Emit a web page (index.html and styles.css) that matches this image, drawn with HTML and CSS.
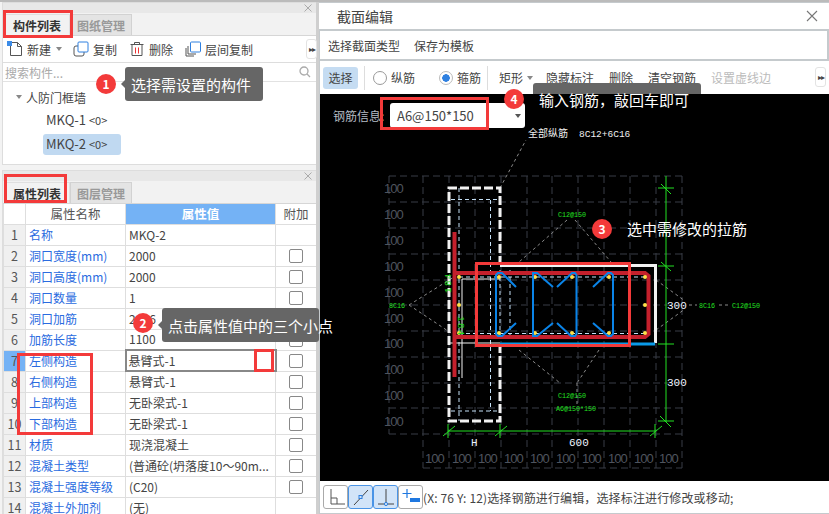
FILE: index.html
```html
<!DOCTYPE html>
<html lang="zh">
<head>
<meta charset="utf-8">
<title>截面编辑</title>
<link rel="stylesheet" href="styles.css">
</head>
<body>
<div class="page">
  <aside class="side">
    <section class="panel panel-top">
      <div class="panel-head"><svg class="close-x" viewBox="0 0 8 8"><path d="M.5 .5l7 7M7.500 .5l-7 7" stroke="#aaa"/></svg></div>
      <div class="tabs"><span class="tab active">构件列表</span><span class="tab">图纸管理</span></div>
      <div class="tools">
        <span class="tool tool-first">
          <svg class="ico" viewBox="0 0 16 16"><path d="M3.500 1.500h7l4 4v9h-11z" fill="#fff" stroke="#555"/><path d="M10.500 1.500v4h4" fill="none" stroke="#555"/><rect x="0" y="0" width="5" height="5" fill="#3b8be8"/></svg>新建<i class="caret"></i>
        </span>
        <span class="tool">
          <svg class="ico" viewBox="0 0 16 16"><rect x="1" y="5" width="10" height="10" rx="2" fill="#fff" stroke="#555"/><rect x="5" y="1" width="10" height="10" rx="1" fill="#fff" stroke="#2f80e0"/></svg>复制
        </span>
        <span class="tool">
          <svg class="ico" viewBox="0 0 16 16"><path d="M3 4v10.500h10V4M1.500 3.500h13M5.500 3V1.500h5V3" fill="none" stroke="#555"/><path d="M6.500 6.500v6M9.500 6.500v6" stroke="#e33"/></svg>删除
        </span>
        <span class="tool">
          <svg class="ico" viewBox="0 0 16 16"><path d="M1 7v8h8M3 5v8h8" fill="none" stroke="#555"/><rect x="5.500" y="1" width="10" height="10" rx="1" fill="#fff" stroke="#2f80e0"/></svg>层间复制
        </span>
        <span class="more">▸▸</span>
      </div>
      <div class="search"><span>搜索构件...</span>
        <svg class="lens" viewBox="0 0 12 12"><circle cx="5" cy="5" r="4" fill="none" stroke="#aaa" stroke-width="1.300"/><path d="M8 8l3 3" stroke="#aaa" stroke-width="1.300"/></svg>
      </div>
      <div class="tree">
        <div class="tree-root"><i class="caret"></i>人防门框墙</div>
        <div class="tree-leaf">MKQ-1 <small>&lt;0&gt;</small></div>
        <div class="tree-leaf selected">MKQ-2 <small>&lt;0&gt;</small></div>
      </div>
    </section>
    <section class="panel panel-bottom">
      <div class="panel-head"><svg class="close-x" viewBox="0 0 8 8"><path d="M.5 .5l7 7M7.500 .5l-7 7" stroke="#aaa"/></svg></div>
      <div class="tabs"><span class="tab active">属性列表</span><span class="tab">图层管理</span></div>
      <table class="props">
        <colgroup><col class="c-num"><col class="c-name"><col class="c-val"><col class="c-add"></colgroup>
        <thead><tr><th></th><th>属性名称</th><th class="hl">属性值</th><th>附加</th></tr></thead>
        <tbody>
          <tr><td class="n">1</td><td class="k">名称</td><td class="v">MKQ-2</td><td></td></tr>
          <tr><td class="n">2</td><td class="k">洞口宽度(mm)</td><td class="v">2000</td><td class="a"><i class="cb"></i></td></tr>
          <tr><td class="n">3</td><td class="k">洞口高度(mm)</td><td class="v">2000</td><td class="a"><i class="cb"></i></td></tr>
          <tr><td class="n">4</td><td class="k">洞口数量</td><td class="v">1</td><td class="a"><i class="cb"></i></td></tr>
          <tr><td class="n">5</td><td class="k">洞口加筋</td><td class="v">2⌀16</td><td class="a"><i class="cb"></i></td></tr>
          <tr><td class="n">6</td><td class="k">加筋长度</td><td class="v">1100</td><td class="a"><i class="cb"></i></td></tr>
          <tr class="cur"><td class="n">7</td><td class="k">左侧构造</td><td class="v">悬臂式-1</td><td class="a"><i class="cb"></i></td></tr>
          <tr><td class="n">8</td><td class="k">右侧构造</td><td class="v">悬臂式-1</td><td class="a"><i class="cb"></i></td></tr>
          <tr><td class="n">9</td><td class="k">上部构造</td><td class="v">无卧梁式-1</td><td class="a"><i class="cb"></i></td></tr>
          <tr><td class="n">10</td><td class="k">下部构造</td><td class="v">无卧梁式-1</td><td class="a"><i class="cb"></i></td></tr>
          <tr><td class="n">11</td><td class="k">材质</td><td class="v">现浇混凝土</td><td class="a"><i class="cb"></i></td></tr>
          <tr><td class="n">12</td><td class="k">混凝土类型</td><td class="v">(普通砼(坍落度10～90m...</td><td class="a"><i class="cb"></i></td></tr>
          <tr><td class="n">13</td><td class="k">混凝土强度等级</td><td class="v">(C20)</td><td class="a"><i class="cb"></i></td></tr>
          <tr><td class="n">14</td><td class="k">混凝土外加剂</td><td class="v">(无)</td><td></td></tr>
        </tbody>
      </table>
    </section>
  </aside>

  <main class="dialog">
    <header class="title"><span>截面编辑</span>
      <svg class="title-x" viewBox="0 0 12 12"><path d="M1 1l10 10M11 1L1 11" stroke="#777" stroke-width="1.100"/></svg>
    </header>
    <nav class="menu"><span>选择截面类型</span><span>保存为模板</span></nav>
    <div class="bar">
      <span class="btn-on">选择</span>
      <i class="sep"></i>
      <label class="radio"><i class="dot"></i>纵筋</label>
      <label class="radio radio-b"><i class="dot dot-on"></i>箍筋</label>
      <i class="sep sep-b"></i>
      <span class="act">矩形<i class="caret"></i></span>
      <span class="act">隐藏标注</span>
      <span class="act">删除</span>
      <span class="act">清空钢筋</span>
      <span class="act off">设置虚线边</span>
      <span class="more more-b">▸▸</span>
    </div>
    <div class="canvas">
      <svg class="draw" viewBox="321 94 508 387" width="508" height="387">
        <path class="grid" d="M390 176H683M390 202H683M390 228H683M390 254H683M390 280H683M390 305H683M390 331H683M390 357H683M390 383H683M390 408H683M390 434H683M424 468H683M390 176V434M424 176V468M450 176V468M476 176V468M502 176V468M528 176V468M553 176V468M579 176V468M605 176V468M631 176V468M657 176V468M683 176V468"/>
        <g class="hundred">
          <text x="385" y="193">100</text><text x="385" y="219">100</text><text x="385" y="245">100</text><text x="385" y="271">100</text><text x="385" y="297">100</text><text x="385" y="323">100</text><text x="385" y="348">100</text><text x="385" y="374">100</text><text x="385" y="400">100</text><text x="385" y="426">100</text>
          <text x="426" y="463">100</text><text x="453" y="463">100</text><text x="479" y="463">100</text><text x="505" y="463">100</text><text x="531" y="463">100</text><text x="557" y="463">100</text><text x="583" y="463">100</text><text x="609" y="463">100</text><text x="635" y="463">100</text><text x="660" y="463">100</text>
        </g>
        <path class="leader" d="M501 188L527 140M568 220L520 262M576 220L612 262M410 305L455 277M410 305L452 333M520 350L561 383M600 350L578 383M578 383V406M657 280L686 301M657 330L686 309M690 305H698M720 305H731"/>
        <path class="ice" d="M460 188V421M491.500 200V411M452 199.500H500M452 411H501M460 277H648M460 333.500H648M511 270V335M501 270V335"/>
        <path class="wall-dash" d="M501 265V188H450V421H501V345"/>
        <path class="wall" d="M501 265.500H656.500V343"/>
        <path class="thin" d="M501 279H463V378M450 343H501"/>
        <path class="stir" d="M455.500 232V377M455 273H646L649.500 276V334L646 337H455"/>
        <path class="base" d="M501 344H656"/>
        <g class="pin">
          <circle cx="460" cy="277" r="2"/><circle cx="460" cy="305" r="2"/><circle cx="460" cy="333" r="2"/>
          <circle cx="500" cy="277" r="2"/><circle cx="536" cy="277" r="2"/><circle cx="573" cy="277" r="2"/><circle cx="610" cy="277" r="2"/>
          <circle cx="500" cy="333" r="2"/><circle cx="536" cy="333" r="2"/><circle cx="573" cy="333" r="2"/><circle cx="610" cy="333" r="2"/>
          <circle cx="646" cy="277" r="2"/><circle cx="646" cy="305" r="2"/><circle cx="646" cy="333" r="2"/>
        </g>
        <path class="tie" d="M517 287L503 273H499L497 275V334L499 336H503L517 323M554 287L538 273H534V336H538L554 323M558 287L573 273H576L577.500 275V334L576 336H572L558 323M594 287L609 273H612L614 275V334L612 336H609L594 323"/>
        <path class="dim" d="M667 176V422M449 431H657M449 424V438M501 424V438M656 424V438"/>
        <path class="dim-thin" d="M659 188H675M662 184L672 194M659 266H675M662 262L672 271M659 344H675M659 421H675M661 416L672 427M444 436L456 426M496 436L508 426M651 436L663 426"/>
        <text class="lbl-w" x="529" y="137">全部纵筋</text>
        <text class="mono-w" x="580" y="137">8C12+6C16</text>
        <text class="green" x="559" y="217">C12@150</text>
        <text class="green" x="390" y="308">8C16</text>
        <text class="green" x="700" y="308">8C16</text>
        <text class="green" x="733" y="308">C12@150</text>
        <text class="green" x="559" y="398">C12@150</text>
        <text class="green" x="557" y="411">A6@150*150</text>
        <text class="green-r" transform="translate(452 293) rotate(-90)">184</text>
        <text class="green-r" transform="translate(459 316) rotate(90)">184</text>
        <text class="dimtxt" x="570" y="446">600</text>
        <text class="dimtxt" x="472" y="446">H</text>
        <text class="dimtxt" x="668" y="309">300</text>
        <text class="dimtxt" x="668" y="386">300</text>
      </svg>
      <div class="steel">
        <span class="steel-label">钢筋信息:</span>
        <div class="combo"><span>A6@150*150</span><i class="caret"></i></div>
      </div>
    </div>
    <footer class="status">
      <span class="sb">
        <svg viewBox="0 0 22 22"><path d="M6 3v15h14M6 12h6v6" fill="none" stroke="#555"/></svg>
      </span>
      <span class="sb sb-on">
        <svg viewBox="0 0 22 22"><path d="M4 19L18 4" stroke="#444"/><rect x="9" y="9.500" width="3" height="3" fill="#cfe2f8" stroke="#2f80e0"/></svg>
      </span>
      <span class="sb sb-on">
        <svg viewBox="0 0 22 22"><path d="M3 18h16M11 3v15" stroke="#444"/><circle cx="11" cy="18" r="1.600" fill="#cfe2f8" stroke="#2f80e0"/></svg>
      </span>
      <span class="sb">
        <svg viewBox="0 0 22 22"><path d="M7 3v9M2.500 7.500h9" stroke="#1f78e0" stroke-width="1.200"/><rect x="10" y="12" width="10" height="4" fill="#1f78e0"/></svg>
      </span>
      <span class="status-text">(X: 76 Y: 12)选择钢筋进行编辑，选择标注进行修改或移动;</span>
    </footer>
  </main>

  <div class="mark mark-tab1"></div>
  <div class="mark mark-tab2"></div>
  <div class="mark mark-rows"></div>
  <div class="mark mark-dots"></div>
  <div class="mark mark-combo"></div>
  <div class="mark mark-tie"></div>

  <div class="tip tip-1">选择需设置的构件</div>
  <div class="tip tip-2">点击属性值中的三个小点</div>
  <div class="tip tip-4"></div>
  <div class="plain plain-3">选中需修改的拉筋</div>
  <div class="plain plain-4">输入钢筋，敲回车即可</div>
  <span class="badge b1">1</span>
  <span class="badge b2">2</span>
  <span class="badge b3">3</span>
  <span class="badge b4">4</span>
</div>
</body>
</html>
```
FILE: styles.css
```css
* { box-sizing: border-box; }
html, body { margin: 0; padding: 0; }
body { font-family: "Noto Sans CJK SC", "Noto Sans", sans-serif; font-size: 12px; color: #444; }
i { display: block; font-style: normal; }

.page { position: relative; display: flex; width: 829px; height: 514px; overflow: hidden; background: #d9d9d9; border-top: 2px solid #bbb; }

/* left column */
.side { width: 319px; flex: none; display: flex; flex-direction: column; padding-left: 2px; background: #f3f3f3; border-right: 3px solid #cfcfcf; }
.panel { background: #fff; border-left: 1px solid #ddd; display: flex; flex-direction: column; }
.panel-top { height: 163px; border-bottom: 1px solid #ddd; }
.panel-bottom { margin-top: 5px; flex: 1; overflow: hidden; }
.panel-head { height: 11px; flex: none; background: #e8e8e8; border-top: 1px solid #ddd; display: flex; align-items: center; justify-content: flex-end; padding-right: 4px; }
.close-x { width: 8px; height: 8px; }
.tabs { height: 23px; flex: none; display: flex; padding-left: 1px; background: #f2f2f2; border-bottom: 1px solid #d6d6d6; }
.tab { width: 62px; display: flex; align-items: center; justify-content: center; font-size: 12px; font-weight: 700; color: #999; background: #e4e4e4; border: 1px solid #d2d2d2; border-bottom: none; margin-top: 1px; }
.tab.active { width: 66px; color: #333; background: #f2f2f2; border-color: #e0e0e0; }

.tools { height: 27px; flex: none; display: flex; align-items: center; padding-left: 4px; border-bottom: 1px solid #ddd; position: relative; }
.tool { display: flex; align-items: center; gap: 4px; margin-right: 12px; color: #444; }
.tool-first { margin-right: 11px; }
.tool-first .caret { margin-left: 1px; }
.ico { width: 16px; height: 16px; flex: none; }
.caret { width: 0; height: 0; border-left: 3.500px solid transparent; border-right: 3.500px solid transparent; border-top: 4px solid #888; margin-left: 4px; }
.more { font-size: 8px; line-height: 17px; letter-spacing: -1px; width: 11px; height: 20px; border: 1px solid #e3e3e3; border-radius: 3px; color: #444; text-align: center; background: #fff; }
.tools .more { position: absolute; right: -1px; top: 3px; }

.search { height: 19px; flex: none; display: flex; align-items: center; justify-content: space-between; padding: 0 5px 0 2px; color: #aaa; border-bottom: 1px solid #e2e2e2; }
.lens { width: 12px; height: 12px; }

.tree { flex: 1; color: #444; font-size: 12px; }
.tree-root { display: flex; align-items: center; height: 20px; margin: 5px 0 0 13px; }
.tree-root .caret { margin: 0 4px 0 0; }
.tree-leaf { height: 21px; width: 78px; margin: 3px 0 0 40px; padding-left: 3px; line-height: 20px; border-radius: 3px; font-size: 13px; white-space: nowrap; }
.tree-leaf small { font-size: 11px; }
.tree-leaf.selected { background: #c0d9f1; }

/* property table */
.props { width: 313px; border-collapse: collapse; table-layout: fixed; }
.c-num { width: 22px; } .c-name { width: 100px; } .c-val { width: 150px; } .c-add { width: 41px; }
.props th { height: 20px; padding: 0; font-weight: 400; font-size: 12.500px; color: #555; background: #fff; border: 1px solid #dedede; border-top: none; }
.props th.hl { background: #74b2f5; color: #fff; font-weight: 700; }
.props td { height: 21px; padding: 0 3px; border: 1px solid #dedede; white-space: nowrap; overflow: hidden; line-height: 18px; }
.props .n { text-align: center; background: #f0f0f0; color: #555; font-size: 12.500px; padding: 0; }
.props .k { color: #2a6be0; }
.props .v { color: #444; }
.props .a { padding: 0; }
.cb { width: 14px; height: 14px; margin: 0 auto; background: #fff; border: 1px solid #888; border-radius: 2px; }
.cur .n { background: #74b2f5; }
.cur .v { border: 2px solid #888; padding-left: 2px; }

/* dialog */
.dialog { flex: 1; display: flex; flex-direction: column; background: #c5cacd; padding: 1px 2px 0 1px; }
.title { height: 26px; flex: none; margin: 0 -2px 0 -1px; display: flex; align-items: center; justify-content: space-between; padding: 0 11px 0 18px; background: #fff; font-size: 14px; color: #444; }
.title-x { width: 12px; height: 12px; }
.menu { height: 28px; flex: none; margin-top: 2px; display: flex; align-items: center; gap: 14px; padding-left: 8px; background: #fff; color: #444; }
.bar { height: 33px; flex: none; margin-top: 2px; margin-right: -2px; display: flex; align-items: center; padding-left: 3px; background: #fff; position: relative; }
.btn-on { width: 35px; height: 22px; display: flex; align-items: center; justify-content: center; background: #c5dcf2; border-radius: 3px; color: #444; }
.sep { width: 1px; height: 24px; background: #ddd; margin-left: 6px; }
.sep-b { margin-left: 6px; margin-right: 11px; }
.radio { display: flex; align-items: center; gap: 4px; margin-left: 8px; color: #444; }
.radio-b { margin-left: 24px; }
.dot { width: 14px; height: 14px; border-radius: 50%; border: 1px solid #999; background: #fff; }
.dot-on { background: radial-gradient(circle, #2f80e0 0, #2f80e0 3.500px, #fff 4px); border-color: #bbb; }
.act { display: flex; align-items: center; margin-right: 15px; color: #444; }
.act .caret { margin-left: 4px; margin-right: -2px; }
.off { color: #bbb; }
.more-b { position: absolute; right: 3px; top: 6px; }

.canvas { position: relative; height: 387px; flex: none; margin-right: -2px; background: #000; padding: 9px 0 0 13px; }
.draw { position: absolute; left: 0; top: 0; display: block; }
.steel { position: relative; display: flex; align-items: center; gap: 7px; height: 25px; }
.steel-label { color: #b5bcc4; width: 50px; white-space: nowrap; }
.combo { width: 135px; height: 25px; background: #fff; border-radius: 3px; display: flex; align-items: center; justify-content: space-between; padding: 0 4px 0 7px; font-size: 13px; color: #444; }
.combo .caret { border-top-color: #555; margin: 0; }

.grid { fill: none; stroke: #383d47; stroke-width: 1; stroke-dasharray: 7 4; }
.hundred text { font-family: "Liberation Sans", sans-serif; font-size: 13px; letter-spacing: -1px; fill: #4f545e; }
.leader { fill: none; stroke: #8a8a8a; stroke-width: 1; stroke-dasharray: 3 3; }
.ice { fill: none; stroke: #c4e0f6; stroke-width: 1; stroke-dasharray: 4 3; }
.wall-dash { fill: none; stroke: #f2f2f2; stroke-width: 3; stroke-dasharray: 9 3; }
.wall { fill: none; stroke: #f2f2f2; stroke-width: 3; }
.thin { fill: none; stroke: #f2f2f2; stroke-width: 1; }
.stir { fill: none; stroke: #c4202c; stroke-width: 4; }
.base { fill: none; stroke: #0a9ae8; stroke-width: 3; }
.pin circle { fill: #ffe14a; }
.tie { fill: none; stroke: #0a84e8; stroke-width: 2; }
.dim { fill: none; stroke: #22e022; stroke-width: 1; }
.dim-thin { fill: none; stroke: #22e022; stroke-width: 1; }
.green { font-family: "Liberation Mono", monospace; font-size: 6.700px; fill: #22e022; }
.green-r { font-family: "Liberation Mono", monospace; font-size: 9px; letter-spacing: 1.500px; fill: #22e022; }
.lbl-w { font-size: 10px; fill: #eee; }
.mono-w { font-family: "Liberation Mono", monospace; font-size: 9.500px; fill: #eee; }
.dimtxt { font-family: "Liberation Mono", monospace; font-size: 11px; fill: #eef4ff; }

.status { height: 32px; flex: none; margin-right: -2px; display: flex; align-items: center; padding-left: 3px; background: #fff; }
.sb { width: 25px; height: 24px; flex: none; display: flex; align-items: center; justify-content: center; border: 1px solid #aaa; border-radius: 3px; background: #fff; }
.sb svg { width: 22px; height: 22px; }
.sb-on { background: #d2e4f8; border-color: #4a94e6; }
.status-text { margin-left: 0; white-space: nowrap; color: #444; font-size: 12px; letter-spacing: .14px; }

/* overlays */
.mark { position: absolute; border: 3px solid #f33a3a; }
.mark-tab1 { left: 3px; top: 8px; width: 70px; height: 28px; }
.mark-tab2 { left: 4px; top: 172px; width: 63px; height: 29px; }
.mark-rows { left: 17px; top: 351px; width: 76px; height: 82px; }
.mark-dots { left: 254px; top: 347px; width: 20px; height: 23px; }
.mark-combo { left: 380px; top: 95px; width: 109px; height: 33px; }
.mark-tie { left: 475px; top: 260px; width: 156px; height: 85px; }

.tip { position: absolute; background: #666; color: #fff; font-size: 15px; display: flex; align-items: center; padding-left: 6px; border-radius: 3px; white-space: nowrap; }
.tip::before { content: ""; position: absolute; left: -4px; top: 50%; margin-top: -4px; border-top: 4px solid transparent; border-bottom: 4px solid transparent; border-right: 4px solid #666; }
.tip-1 { left: 125px; top: 65px; width: 138px; height: 34px; }
.tip-2 { left: 162px; top: 306px; width: 157px; height: 34px; }
.tip-4 { left: 533px; top: 81px; width: 168px; height: 11px; border-radius: 3px 3px 0 0; }
.tip-4::before { display: none; }
.plain { position: absolute; color: #fff; font-size: 15px; line-height: 20px; white-space: nowrap; }
.plain-3 { left: 627px; top: 217px; }
.plain-4 { left: 539px; top: 88px; }
.badge { position: absolute; width: 20px; height: 20px; border-radius: 50%; background: #f33a3a; color: #fff; font-size: 12px; font-weight: 700; line-height: 20px; text-align: center; }
.b1 { left: 96px; top: 72px; }
.b2 { left: 133px; top: 311px; }
.b3 { left: 592px; top: 217px; }
.b4 { left: 504px; top: 87px; }
```
